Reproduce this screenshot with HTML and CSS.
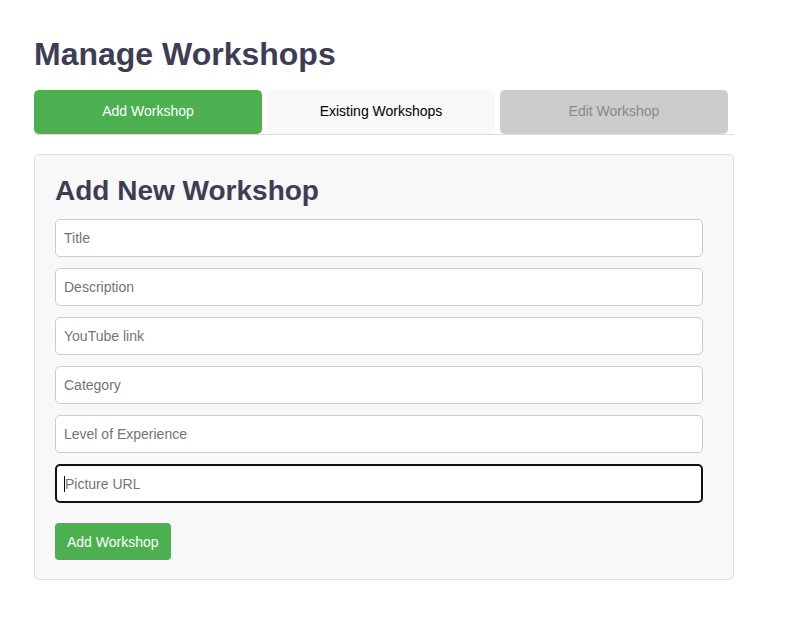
FILE: index.html
```html
<!DOCTYPE html>
<html lang="en">
<head>
<meta charset="utf-8">
<title>Manage Workshops</title>
<link rel="stylesheet" href="styles.css">
</head>
<body>
<div class="page">
  <h1 class="title">Manage Workshops</h1>
  <div class="tabs">
    <button class="tab tab-active">Add Workshop</button>
    <button class="tab">Existing Workshops</button>
    <button class="tab tab-disabled">Edit Workshop</button>
  </div>
  <div class="card">
    <h2 class="card-title">Add New Workshop</h2>
    <form class="form">
      <input class="field" type="text" placeholder="Title">
      <input class="field" type="text" placeholder="Description">
      <input class="field" type="text" placeholder="YouTube link">
      <input class="field" type="text" placeholder="Category">
      <input class="field" type="text" placeholder="Level of Experience">
      <div class="field field-focus"><span class="caret"></span><span class="ph">Picture URL</span></div>
      <button class="submit" type="button">Add Workshop</button>
    </form>
  </div>
</div>
</body>
</html>
```
FILE: styles.css
```css
* { box-sizing: border-box; }
body {
  margin: 0;
  background: #fff;
  font-family: "Liberation Sans", Arial, sans-serif;
}
.page {
  width: 700px;
  margin-left: 34px;
  padding-top: 36px;
}
.title {
  margin: 0 0 17px;
  font-size: 32px;
  line-height: 37px;
  font-weight: bold;
  color: #3f3d56;
}
.tabs {
  display: flex;
  border-bottom: 1px solid #ddd;
  padding-right: 1px;
}
.tab {
  flex: 1;
  margin-right: 5px;
  height: 44px;
  border: none;
  border-radius: 5px;
  background: #f8f8f8;
  color: #000;
  font-family: "Liberation Sans", Arial, sans-serif;
  font-size: 14px;
  line-height: 16px;
  padding: 0 0 2px;
}
.tab-active { background: #4caf50; color: #fff; }
.tab-disabled { background: #ccc; color: #888; }
.card {
  margin-top: 19px;
  border: 1px solid #ddd;
  border-radius: 5px;
  background: #f8f8f8;
  padding: 20px 20px 19px;
}
.card-title {
  margin: 0 0 13px;
  font-size: 28px;
  line-height: 31px;
  font-weight: bold;
  color: #3f3d56;
}
.form {
  display: flex;
  flex-direction: column;
  align-items: flex-start;
}
.field {
  display: block;
  width: 648px;
  height: 38px;
  margin-bottom: 11px;
  padding: 0 8px;
  border: 1px solid #ccc;
  border-radius: 5px;
  background: #fff;
  font-family: "Liberation Sans", Arial, sans-serif;
  font-size: 14px;
  color: #333;
}
.field::placeholder { color: #757575; }
.field-focus {
  display: flex;
  align-items: center;
  border: 2px solid #111;
  padding-left: 7px;
  height: 39px;
  margin-bottom: 20px;
}
.caret {
  width: 1px;
  height: 16px;
  background: #000;
}
.ph {
  color: #757575;
  font-size: 14px;
}
.submit {
  height: 37px;
  padding: 0 12px;
  border: none;
  border-radius: 4px;
  background: #4caf50;
  color: #fff;
  font-family: "Liberation Sans", Arial, sans-serif;
  font-size: 14px;
  font-weight: normal;
}
```
